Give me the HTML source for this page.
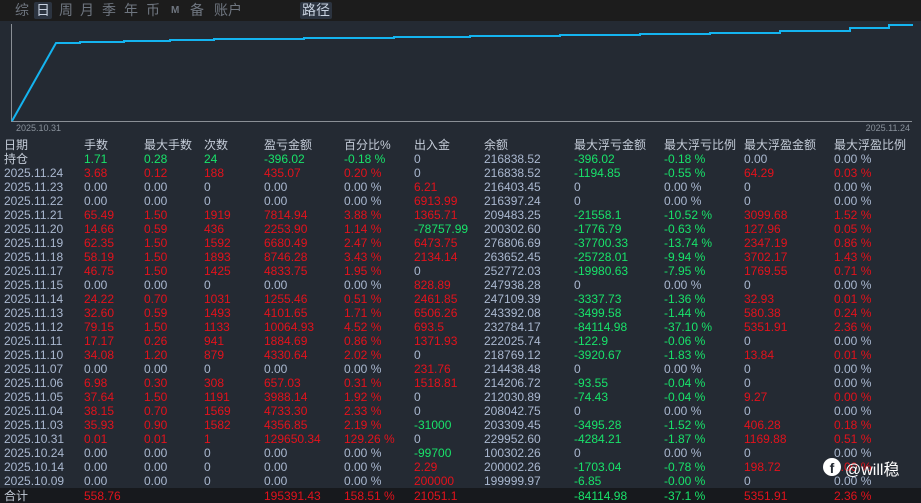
<!DOCTYPE html>
<html><head><meta charset="utf-8"><style>
body{margin:0;width:921px;height:503px;background:#242a33;overflow:hidden;font-family:"Liberation Sans","Noto Sans CJK SC",sans-serif;position:relative}
.top{position:absolute;left:0;top:0;width:921px;height:21px;background:#1c1c1c}
.top span{position:absolute;top:2px;font-size:14px;color:#6f7680;line-height:17px}
.top .on{color:#c8d2e0;background:#2c3440;padding:0 2px;border-radius:2px}
.row{position:absolute;left:0;width:921px;height:14px;font-size:12px;line-height:14px;color:#aab8d0}
.row span{position:absolute;white-space:nowrap}
.h{font-size:12px;color:#c4ccd8}
.r{color:#e3121c!important}.g{color:#18e36a!important}
.a{left:4px}.b{left:84px}.c{left:144px}.d{left:204px}.e{left:264px}.f{left:344px}.x{left:414px}.y{left:484px}.i{left:574px}.j{left:664px}.k{left:744px}.l{left:834px}
.foot{position:absolute;left:0;top:488px;width:921px;height:15px;background:#17191d}
</style></head><body>
<div class="top">
<span style="left:15px">综</span><span class="on" style="left:34px">日</span><span style="left:59px">周</span><span style="left:80px">月</span><span style="left:102px">季</span><span style="left:124px">年</span><span style="left:146px">币</span><span style="left:171px;font-size:10px;font-weight:bold">M</span><span style="left:190px">备</span><span style="left:214px">账户</span><span class="on" style="left:300px">路径</span>
</div>
<svg style="position:absolute;left:0;top:0" width="921" height="135">
<line x1="11.5" y1="24" x2="11.5" y2="121" stroke="#8a8f96" stroke-width="1"/>
<line x1="11" y1="121.5" x2="912" y2="121.5" stroke="#8a8f96" stroke-width="1"/>
<polyline fill="none" stroke="#14b4f0" stroke-width="2" points="12,121 56,43 80,43 80,42 124,42 124,41 170,41 170,40 214,40 214,39 304,39 304,38 394,38 394,37 470,37 470,36 560,36 560,35 640,35 640,34 710,34 710,33 780,33 780,31 850,31 850,28 889,28 889,25 913,25"/>
<text x="16" y="131" font-size="9" fill="#8a929c" font-family="Liberation Sans">2025.10.31</text>
<text x="910" y="131" font-size="9" fill="#8a929c" text-anchor="end" font-family="Liberation Sans">2025.11.24</text>
</svg>
<div class="row h" style="top:138px"><span class="a">日期</span><span class="b">手数</span><span class="c">最大手数</span><span class="d">次数</span><span class="e">盈亏金额</span><span class="f">百分比%</span><span class="x">出入金</span><span class="y">余额</span><span class="i">最大浮亏金额</span><span class="j">最大浮亏比例</span><span class="k">最大浮盈金额</span><span class="l">最大浮盈比例</span></div>
<div class="row" style="top:152px"><span class="a h">持仓</span><span class="b g">1.71</span><span class="c g">0.28</span><span class="d g">24</span><span class="e g">-396.02</span><span class="f g">-0.18 %</span><span class="x">0</span><span class="y">216838.52</span><span class="i g">-396.02</span><span class="j g">-0.18 %</span><span class="k">0.00</span><span class="l">0.00 %</span></div>
<div class="row" style="top:166px"><span class="a">2025.11.24</span><span class="b r">3.68</span><span class="c r">0.12</span><span class="d r">188</span><span class="e r">435.07</span><span class="f r">0.20 %</span><span class="x">0</span><span class="y">216838.52</span><span class="i g">-1194.85</span><span class="j g">-0.55 %</span><span class="k r">64.29</span><span class="l r">0.03 %</span></div>
<div class="row" style="top:180px"><span class="a">2025.11.23</span><span class="b">0.00</span><span class="c">0.00</span><span class="d">0</span><span class="e">0.00</span><span class="f">0.00 %</span><span class="x r">6.21</span><span class="y">216403.45</span><span class="i">0</span><span class="j">0.00 %</span><span class="k">0</span><span class="l">0.00 %</span></div>
<div class="row" style="top:194px"><span class="a">2025.11.22</span><span class="b">0.00</span><span class="c">0.00</span><span class="d">0</span><span class="e">0.00</span><span class="f">0.00 %</span><span class="x r">6913.99</span><span class="y">216397.24</span><span class="i">0</span><span class="j">0.00 %</span><span class="k">0</span><span class="l">0.00 %</span></div>
<div class="row" style="top:208px"><span class="a">2025.11.21</span><span class="b r">65.49</span><span class="c r">1.50</span><span class="d r">1919</span><span class="e r">7814.94</span><span class="f r">3.88 %</span><span class="x r">1365.71</span><span class="y">209483.25</span><span class="i g">-21558.1</span><span class="j g">-10.52 %</span><span class="k r">3099.68</span><span class="l r">1.52 %</span></div>
<div class="row" style="top:222px"><span class="a">2025.11.20</span><span class="b r">14.66</span><span class="c r">0.59</span><span class="d r">436</span><span class="e r">2253.90</span><span class="f r">1.14 %</span><span class="x g">-78757.99</span><span class="y">200302.60</span><span class="i g">-1776.79</span><span class="j g">-0.63 %</span><span class="k r">127.96</span><span class="l r">0.05 %</span></div>
<div class="row" style="top:236px"><span class="a">2025.11.19</span><span class="b r">62.35</span><span class="c r">1.50</span><span class="d r">1592</span><span class="e r">6680.49</span><span class="f r">2.47 %</span><span class="x r">6473.75</span><span class="y">276806.69</span><span class="i g">-37700.33</span><span class="j g">-13.74 %</span><span class="k r">2347.19</span><span class="l r">0.86 %</span></div>
<div class="row" style="top:250px"><span class="a">2025.11.18</span><span class="b r">58.19</span><span class="c r">1.50</span><span class="d r">1893</span><span class="e r">8746.28</span><span class="f r">3.43 %</span><span class="x r">2134.14</span><span class="y">263652.45</span><span class="i g">-25728.01</span><span class="j g">-9.94 %</span><span class="k r">3702.17</span><span class="l r">1.43 %</span></div>
<div class="row" style="top:264px"><span class="a">2025.11.17</span><span class="b r">46.75</span><span class="c r">1.50</span><span class="d r">1425</span><span class="e r">4833.75</span><span class="f r">1.95 %</span><span class="x">0</span><span class="y">252772.03</span><span class="i g">-19980.63</span><span class="j g">-7.95 %</span><span class="k r">1769.55</span><span class="l r">0.71 %</span></div>
<div class="row" style="top:278px"><span class="a">2025.11.15</span><span class="b">0.00</span><span class="c">0.00</span><span class="d">0</span><span class="e">0.00</span><span class="f">0.00 %</span><span class="x r">828.89</span><span class="y">247938.28</span><span class="i">0</span><span class="j">0.00 %</span><span class="k">0</span><span class="l">0.00 %</span></div>
<div class="row" style="top:292px"><span class="a">2025.11.14</span><span class="b r">24.22</span><span class="c r">0.70</span><span class="d r">1031</span><span class="e r">1255.46</span><span class="f r">0.51 %</span><span class="x r">2461.85</span><span class="y">247109.39</span><span class="i g">-3337.73</span><span class="j g">-1.36 %</span><span class="k r">32.93</span><span class="l r">0.01 %</span></div>
<div class="row" style="top:306px"><span class="a">2025.11.13</span><span class="b r">32.60</span><span class="c r">0.59</span><span class="d r">1493</span><span class="e r">4101.65</span><span class="f r">1.71 %</span><span class="x r">6506.26</span><span class="y">243392.08</span><span class="i g">-3499.58</span><span class="j g">-1.44 %</span><span class="k r">580.38</span><span class="l r">0.24 %</span></div>
<div class="row" style="top:320px"><span class="a">2025.11.12</span><span class="b r">79.15</span><span class="c r">1.50</span><span class="d r">1133</span><span class="e r">10064.93</span><span class="f r">4.52 %</span><span class="x r">693.5</span><span class="y">232784.17</span><span class="i g">-84114.98</span><span class="j g">-37.10 %</span><span class="k r">5351.91</span><span class="l r">2.36 %</span></div>
<div class="row" style="top:334px"><span class="a">2025.11.11</span><span class="b r">17.17</span><span class="c r">0.26</span><span class="d r">941</span><span class="e r">1884.69</span><span class="f r">0.86 %</span><span class="x r">1371.93</span><span class="y">222025.74</span><span class="i g">-122.9</span><span class="j g">-0.06 %</span><span class="k">0</span><span class="l">0.00 %</span></div>
<div class="row" style="top:348px"><span class="a">2025.11.10</span><span class="b r">34.08</span><span class="c r">1.20</span><span class="d r">879</span><span class="e r">4330.64</span><span class="f r">2.02 %</span><span class="x">0</span><span class="y">218769.12</span><span class="i g">-3920.67</span><span class="j g">-1.83 %</span><span class="k r">13.84</span><span class="l r">0.01 %</span></div>
<div class="row" style="top:362px"><span class="a">2025.11.07</span><span class="b">0.00</span><span class="c">0.00</span><span class="d">0</span><span class="e">0.00</span><span class="f">0.00 %</span><span class="x r">231.76</span><span class="y">214438.48</span><span class="i">0</span><span class="j">0.00 %</span><span class="k">0</span><span class="l">0.00 %</span></div>
<div class="row" style="top:376px"><span class="a">2025.11.06</span><span class="b r">6.98</span><span class="c r">0.30</span><span class="d r">308</span><span class="e r">657.03</span><span class="f r">0.31 %</span><span class="x r">1518.81</span><span class="y">214206.72</span><span class="i g">-93.55</span><span class="j g">-0.04 %</span><span class="k">0</span><span class="l">0.00 %</span></div>
<div class="row" style="top:390px"><span class="a">2025.11.05</span><span class="b r">37.64</span><span class="c r">1.50</span><span class="d r">1191</span><span class="e r">3988.14</span><span class="f r">1.92 %</span><span class="x">0</span><span class="y">212030.89</span><span class="i g">-74.43</span><span class="j g">-0.04 %</span><span class="k r">9.27</span><span class="l r">0.00 %</span></div>
<div class="row" style="top:404px"><span class="a">2025.11.04</span><span class="b r">38.15</span><span class="c r">0.70</span><span class="d r">1569</span><span class="e r">4733.30</span><span class="f r">2.33 %</span><span class="x">0</span><span class="y">208042.75</span><span class="i">0</span><span class="j">0.00 %</span><span class="k">0</span><span class="l">0.00 %</span></div>
<div class="row" style="top:418px"><span class="a">2025.11.03</span><span class="b r">35.93</span><span class="c r">0.90</span><span class="d r">1582</span><span class="e r">4356.85</span><span class="f r">2.19 %</span><span class="x g">-31000</span><span class="y">203309.45</span><span class="i g">-3495.28</span><span class="j g">-1.52 %</span><span class="k r">406.28</span><span class="l r">0.18 %</span></div>
<div class="row" style="top:432px"><span class="a">2025.10.31</span><span class="b r">0.01</span><span class="c r">0.01</span><span class="d r">1</span><span class="e r">129650.34</span><span class="f r">129.26 %</span><span class="x">0</span><span class="y">229952.60</span><span class="i g">-4284.21</span><span class="j g">-1.87 %</span><span class="k r">1169.88</span><span class="l r">0.51 %</span></div>
<div class="row" style="top:446px"><span class="a">2025.10.24</span><span class="b">0.00</span><span class="c">0.00</span><span class="d">0</span><span class="e">0.00</span><span class="f">0.00 %</span><span class="x g">-99700</span><span class="y">100302.26</span><span class="i">0</span><span class="j">0.00 %</span><span class="k">0</span><span class="l">0.00 %</span></div>
<div class="row" style="top:460px"><span class="a">2025.10.14</span><span class="b">0.00</span><span class="c">0.00</span><span class="d">0</span><span class="e">0.00</span><span class="f">0.00 %</span><span class="x r">2.29</span><span class="y">200002.26</span><span class="i g">-1703.04</span><span class="j g">-0.78 %</span><span class="k r">198.72</span><span class="l r">0.00 %</span></div>
<div class="row" style="top:474px"><span class="a">2025.10.09</span><span class="b">0.00</span><span class="c">0.00</span><span class="d">0</span><span class="e">0.00</span><span class="f">0.00 %</span><span class="x r">200000</span><span class="y">199999.97</span><span class="i g">-6.85</span><span class="j g">-0.00 %</span><span class="k">0</span><span class="l">0.00 %</span></div>
<div class="foot"></div>
<div class="row" style="top:489px"><span class="a h">合计</span><span class="b r">558.76</span><span class="e r">195391.43</span><span class="f r">158.51 %</span><span class="x r">21051.1</span><span class="i g">-84114.98</span><span class="j g">-37.1 %</span><span class="k r">5351.91</span><span class="l r">2.36 %</span></div>
<div style="position:absolute;left:823px;top:458px;width:18px;height:18px;border-radius:50%;background:#fff;color:#242a33;font:bold 14px 'Liberation Sans',sans-serif;text-align:center;line-height:20px">f</div>
<div style="position:absolute;left:845px;top:456px;color:#fff;font-size:16px;font-family:'Liberation Sans','Noto Sans CJK SC',sans-serif">@will稳</div>
</body></html>
